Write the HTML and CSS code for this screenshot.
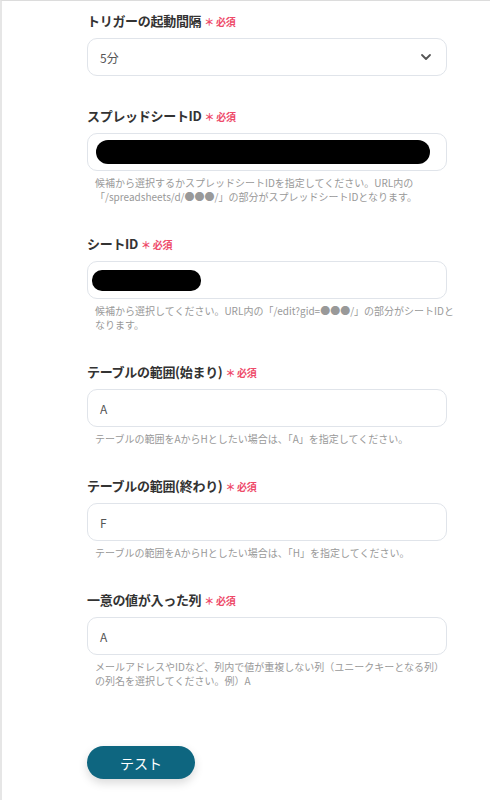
FILE: index.html
```html
<!DOCTYPE html>
<html lang="ja">
<head>
  <meta charset="UTF-8">
  <title>設定</title>
  <link rel="stylesheet" href="styles.css">
</head>
<body>
  <div class="page">
    <div class="form">
      <div class="field">
        <div class="label">トリガーの起動間隔<span class="req">＊ 必須</span></div>
        <div class="input select">
          <span>5分</span>
          <svg class="chevron" width="12" height="8" viewBox="0 0 12 8"><path d="M2 2l4 4 4-4" fill="none" stroke="#555" stroke-width="1.8" stroke-linecap="round" stroke-linejoin="round"/></svg>
        </div>
      </div>

      <div class="field">
        <div class="label">スプレッドシートID<span class="req">＊ 必須</span></div>
        <div class="input"><span class="redact redact-long"></span></div>
        <div class="help">候補から選択するかスプレッドシートIDを指定してください。URL内の<br>「/spreadsheets/d/●●●/」の部分がスプレッドシートIDとなります。</div>
      </div>

      <div class="field">
        <div class="label">シートID<span class="req">＊ 必須</span></div>
        <div class="input short-pad"><span class="redact redact-short"></span></div>
        <div class="help">候補から選択してください。URL内の「/edit?gid=●●●/」の部分がシートIDと<br>なります。</div>
      </div>

      <div class="field">
        <div class="label">テーブルの範囲(始まり)<span class="req">＊ 必須</span></div>
        <div class="input"><span>A</span></div>
        <div class="help">テーブルの範囲をAからHとしたい場合は、「A」を指定してください。</div>
      </div>

      <div class="field">
        <div class="label">テーブルの範囲(終わり)<span class="req">＊ 必須</span></div>
        <div class="input"><span>F</span></div>
        <div class="help">テーブルの範囲をAからHとしたい場合は、「H」を指定してください。</div>
      </div>

      <div class="field">
        <div class="label">一意の値が入った列<span class="req">＊ 必須</span></div>
        <div class="input"><span>A</span></div>
        <div class="help">メールアドレスやIDなど、列内で値が重複しない列（ユニークキーとなる列）<br>の列名を選択してください。例）A</div>
      </div>

      <button class="test-btn">テスト</button>
    </div>
  </div>
</body>
</html>
```

FILE: styles.css
```css
body {
  margin: 0;
  padding: 0;
  background-color: #fff;
  font-family: "Noto Sans CJK JP", "Noto Sans", sans-serif;
  color: #333;
}
.page {
  height: 800px;
  border-top: 1px solid #dcdcdc;
  border-left: 2px solid #e6e6e6;
  box-sizing: border-box;
}
.form {
  width: 360px;
  padding: 11px 0 0 85px;
}
.field {
  margin-bottom: 31px;
}
.label {
  height: 18px;
  line-height: 18px;
  font-size: 13px;
  font-weight: bold;
  color: #333;
  letter-spacing: -0.3px;
  margin-bottom: 8px;
}
.req {
  color: #ee4b6a;
  font-size: 10px;
  margin-left: 3px;
}
.input {
  height: 38px;
  box-sizing: border-box;
  border: 1.5px solid #e0e4ea;
  border-radius: 10px;
  display: flex;
  align-items: center;
  padding: 0 12px;
  font-size: 12px;
  color: #555;
}
.input.short-pad {
  padding: 0 4px;
}
.select {
  justify-content: space-between;
}
.chevron {
  margin-right: 2px;
}
.redact {
  display: block;
  background-color: #000;
  border-radius: 12px;
}
.redact-long {
  width: 334px;
  height: 24px;
  margin-left: -4px;
}
.redact-short {
  width: 109px;
  height: 21px;
  border-radius: 10px;
}
.help {
  font-size: 10px;
  line-height: 14px;
  color: #999;
  padding-left: 8px;
  margin-right: -10px;
  white-space: nowrap;
  margin-top: 5px;
}
.test-btn {
  margin-top: 27px;
  width: 108px;
  height: 33px;
  border: none;
  border-radius: 17px;
  background-color: #0e6680;
  color: #fff;
  font-family: "Noto Sans CJK JP", sans-serif;
  font-size: 14px;
  box-shadow: 0 4px 10px rgba(0, 0, 0, 0.15);
}
```
